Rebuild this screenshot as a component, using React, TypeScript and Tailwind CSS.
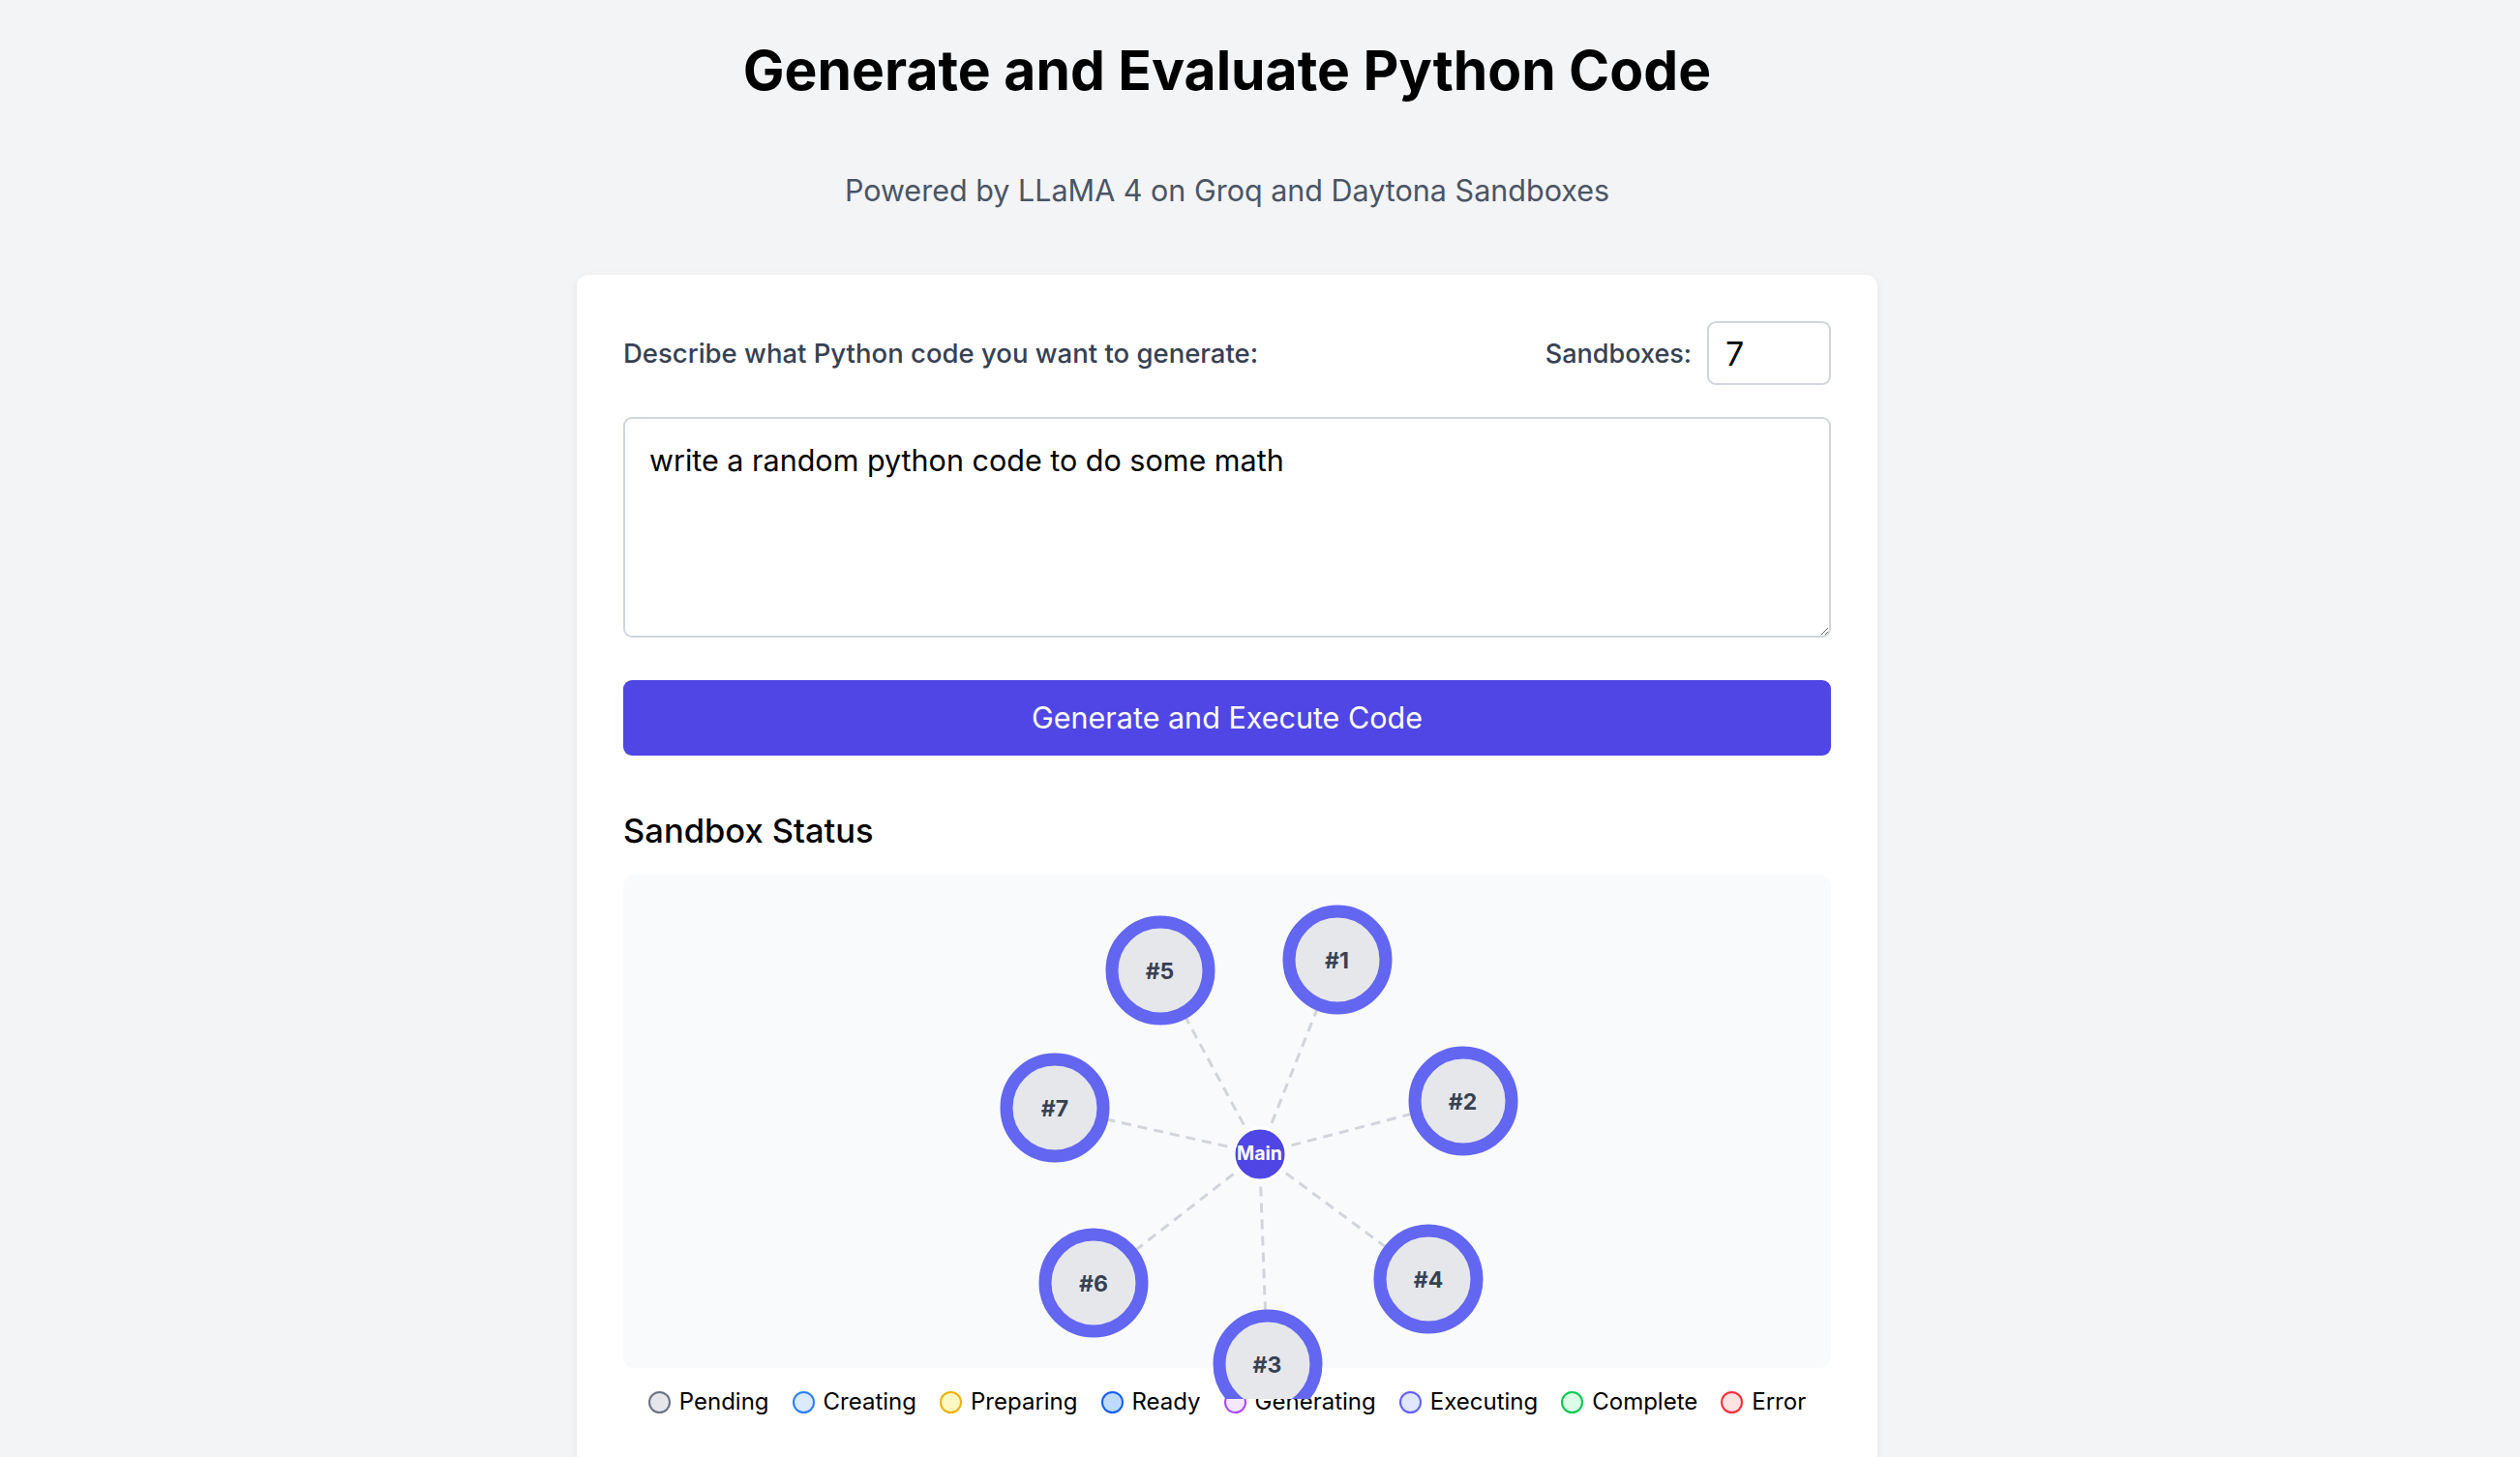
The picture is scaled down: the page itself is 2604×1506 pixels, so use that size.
import { useState } from 'react';

interface SandboxNode {
  id: number;
  x: number;
  y: number;
}

interface LegendItem {
  label: string;
  dot: string;
}

// positions are centers inside the graph panel
const MAIN = { x: 657.5, y: 288.5 };

const NODES: SandboxNode[] = [
  { id: 1, x: 737.5, y: 87.5 },
  { id: 2, x: 867.5, y: 233.5 },
  { id: 3, x: 665.5, y: 505.5 },
  { id: 4, x: 832, y: 417.5 },
  { id: 5, x: 554.5, y: 98.5 },
  { id: 6, x: 486, y: 422 },
  { id: 7, x: 446, y: 241 },
];

const LEGEND: LegendItem[] = [
  { label: 'Pending', dot: 'bg-gray-200 border-gray-500' },
  { label: 'Creating', dot: 'bg-blue-100 border-blue-500' },
  { label: 'Preparing', dot: 'bg-yellow-100 border-yellow-500' },
  { label: 'Ready', dot: 'bg-blue-200 border-blue-600' },
  { label: 'Generating', dot: 'bg-purple-100 border-purple-500' },
  { label: 'Executing', dot: 'bg-indigo-100 border-indigo-500' },
  { label: 'Complete', dot: 'bg-green-100 border-green-500' },
  { label: 'Error', dot: 'bg-red-100 border-red-500' },
];

export default function App() {
  const [prompt, setPrompt] = useState('write a random python code to do some math');
  const [count, setCount] = useState('7');

  return (
    <div className="h-[1506px] overflow-hidden bg-gray-100 pr-[68px] font-['Inter',sans-serif]">
      <div className="mx-auto w-[1344px]">
        {/* HEADER */}
        <h1 className="pt-[43px] text-center text-[57px] leading-[60px] font-bold text-black">
          Generate and Evaluate Python Code
        </h1>
        <p className="mt-[73px] text-center text-[30.5px] leading-[42px] text-gray-600">
          Powered by LLaMA 4 on Groq and Daytona Sandboxes
        </p>

        {/* CARD */}
        <div className="mt-[66px] rounded-[12px] bg-white p-[48px] shadow-[0_2px_10px_rgba(0,0,0,0.06)]">
          <div className="flex items-center justify-between">
            <label className="pt-[2px] text-[27.5px] font-medium text-gray-700">
              Describe what Python code you want to generate:
            </label>
            <div className="flex items-center gap-[16px]">
              <span className="pt-[2px] text-[27px] font-medium text-gray-700">Sandboxes:</span>
              <input
                type="text"
                value={count}
                onChange={(e) => setCount(e.target.value)}
                className="h-[66px] w-[128px] rounded-[9px] border-2 border-gray-300 px-[17px] text-[34px] text-black outline-none"
              />
            </div>
          </div>

          <textarea
            value={prompt}
            onChange={(e) => setPrompt(e.target.value)}
            className="mt-[33px] block h-[228px] w-full resize-y rounded-[9px] border-2 border-gray-300 px-[25px] py-[20px] text-[30.5px] leading-[45px] text-black outline-none"
          />

          <button className="mt-[44px] h-[78px] w-full rounded-[9px] bg-[#4f46e5] text-[30.5px] text-white">
            Generate and Execute Code
          </button>

          {/* SANDBOX STATUS */}
          <h2 className="mt-[57px] text-[34.5px] leading-[42px] font-medium text-black">Sandbox Status</h2>

          <div className="relative mt-[24px]">
            <div className="h-[510px] rounded-[12px] bg-gray-50" />

            <div className="mt-[17px] flex flex-wrap justify-center gap-x-[24px]">
              {LEGEND.map((item) => (
                <div key={item.label} className="flex items-center gap-[9px]">
                  <span className={`h-[23px] w-[23px] rounded-full border-2 ${item.dot}`} />
                  <span className="text-[24px] leading-[36px] text-black">{item.label}</span>
                </div>
              ))}
            </div>

            {/* GRAPH */}
            <div className="absolute top-0 left-0 z-10 h-[542px] w-full overflow-hidden">
              <svg className="absolute inset-0 h-full w-full">
                {NODES.map((n) => (
                  <line
                    key={n.id}
                    x1={MAIN.x}
                    y1={MAIN.y}
                    x2={n.x}
                    y2={n.y}
                    stroke="#d1d5db"
                    strokeWidth={3}
                    strokeDasharray="10 7"
                  />
                ))}
              </svg>

              {NODES.map((n) => (
                <div
                  key={n.id}
                  className="absolute flex h-[113px] w-[113px] -translate-x-1/2 -translate-y-1/2 items-center justify-center rounded-full border-[13px] border-[#6366f1] bg-gray-200 pt-[2px] text-[23px] font-bold text-gray-700"
                  style={{ left: n.x, top: n.y }}
                >
                  #{n.id}
                </div>
              ))}

              <div
                className="absolute flex h-[57px] w-[57px] -translate-x-1/2 -translate-y-1/2 items-center justify-center rounded-full border-[3px] border-white bg-[#4f46e5] text-[19.5px] font-bold text-white"
                style={{ left: MAIN.x, top: MAIN.y }}
              >
                Main
              </div>
            </div>
          </div>
        </div>
      </div>
    </div>
  );
}
